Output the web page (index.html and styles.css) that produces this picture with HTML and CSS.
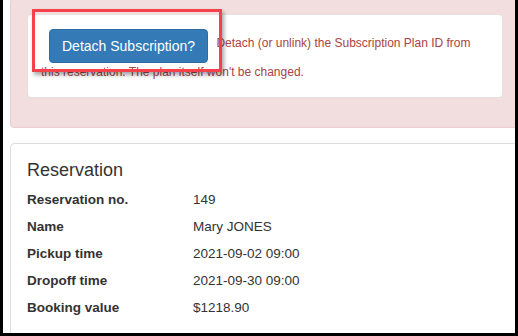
FILE: index.html
```html
<!DOCTYPE html>
<html>
<head>
    <meta charset="UTF-8">
    <title>Reservation</title>
    <link rel="stylesheet" href="styles.css">
</head>
<body>
    <div class="frame">
        <div class="alert">
            <div class="well">
                <p class="detach">
                    <button class="btn">Detach Subscription?</button>
                    Detach (or unlink) the Subscription Plan ID from this reservation. The plan itself won't be changed.
                </p>
            </div>
        </div>

        <div class="panel">
            <h3 class="panel-title">Reservation</h3>
            <dl class="details">
                <dt>Reservation no.</dt>
                <dd>149</dd>
                <dt>Name</dt>
                <dd>Mary JONES</dd>
                <dt>Pickup time</dt>
                <dd>2021-09-02 09:00</dd>
                <dt>Dropoff time</dt>
                <dd>2021-09-30 09:00</dd>
                <dt>Booking value</dt>
                <dd>$1218.90</dd>
            </dl>
        </div>

        <!-- annotation box drawn over the button -->
        <div class="highlight"></div>
    </div>
</body>
</html>
```

FILE: styles.css
```css
html, body {
    margin: 0;
    padding: 0;
    background: #fff;
}
body {
    font-family: "Liberation Sans", Arial, sans-serif;
    color: #333;
}
.frame {
    position: relative;
    width: 518px;
    height: 336px;
    box-sizing: border-box;
    border: 3px solid #000;
    border-top: 0;
    padding-left: 7px;
    overflow: hidden;
}
.alert {
    margin: -2px -4px 0 0;
    padding: 15px 15px 29px 16px;
    background: #f2dede;
    border: 1px solid #ebccd1;
    border-radius: 4px;
    color: #a94442;
}
.well {
    background: #fff;
    border: 1px solid #e6dfe0;
    border-radius: 4px;
    padding: 14px 13px 12px;
}
.detach {
    margin: 0;
    font-size: 12px;
    line-height: 26px;
}
.btn {
    display: inline-block;
    vertical-align: middle;
    margin: 0 5px -4px 8px;
    padding: 6px 12px;
    font-family: inherit;
    font-size: 14px;
    line-height: 20px;
    color: #fff;
    background: #337ab7;
    border: 1px solid #2e6da4;
    border-radius: 4px;
    cursor: pointer;
}
.panel {
    margin: 15px -4px 0 0;
    padding: 15px 16px 20px;
    border: 1px solid #ddd;
    border-radius: 4px;
    min-height: 220px;
}
.panel-title {
    margin: 0 0 5px;
    font-size: 18px;
    font-weight: normal;
    line-height: 22px;
    color: #333;
}
.details {
    display: grid;
    grid-template-columns: 166px 1fr;
    margin: 0;
    font-size: 13.5px;
    line-height: 27px;
}
.details dt {
    font-weight: bold;
}
.details dd {
    margin: 0;
}
.highlight {
    position: absolute;
    left: 29px;
    top: 9px;
    width: 190px;
    height: 63px;
    box-sizing: border-box;
    border: 3px solid #f5424a;
    box-shadow: 2px 3px 4px rgba(0, 0, 0, 0.35);
}
```
